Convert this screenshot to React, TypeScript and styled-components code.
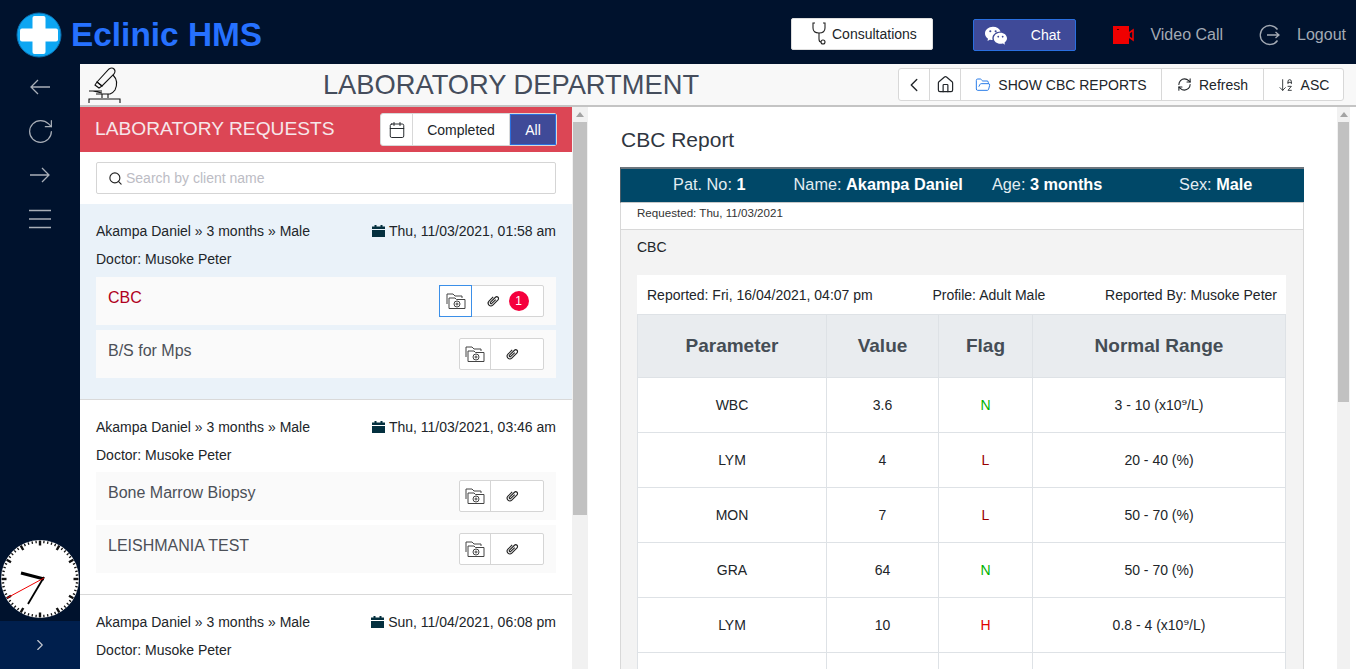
import React from 'react';
import styled, { createGlobalStyle } from 'styled-components';
import {
  RotateCw, ChevronRight, ChevronLeft, Home, FolderOpen,
  RefreshCw, ArrowDownAZ, Calendar, Search,
} from 'lucide-react';
import { BsWechat } from 'react-icons/bs';

const GlobalStyle = createGlobalStyle`
  html, body {
    margin: 0;
    height: 100%;
    overflow: hidden;
    font-family: "Liberation Sans", Arial, "DejaVu Sans", sans-serif;
    color: #212529;
  }
  * { box-sizing: border-box; }
`;

const Page = styled.div`
  display: flex;
  flex-direction: column;
  height: 669px;
  width: 1356px;
  overflow: hidden;
`;

const TopBar = styled.header`
  display: flex;
  align-items: center;
  height: 64px;
  flex: none;
  padding: 5px 10px 0 16px;
  background: #00122d;
`;

const Brand = styled.div`
  display: flex;
  align-items: center;
  gap: 9px;
  flex: 1;
  color: #2671ff;
  font-size: 33.4px;
  font-weight: 700;
`;

const TopNav = styled.nav`
  display: flex;
  align-items: center;
`;

const ConsultButton = styled.button`
  display: flex;
  align-items: center;
  justify-content: center;
  width: 142px;
  height: 32px;
  gap: 6px;
  margin: 0 40px 2px 0;
  padding: 0 0 0 4px;
  background: #fff;
  border: 1px solid #ddd;
  border-radius: 2px;
  color: #212529;
  font: 14px "Liberation Sans", Arial, sans-serif;
`;

const ChatButton = styled.button`
  display: flex;
  align-items: center;
  width: 103px;
  height: 32px;
  margin-right: 37px;
  padding: 0 15px 0 11px;
  justify-content: space-between;
  background: #3f4a98;
  border: 1px solid #2a6fe0;
  border-radius: 2px;
  color: #fff;
  font: 14px "Liberation Sans", Arial, sans-serif;
`;

const NavLink = styled.a<{ $gap: number; $last?: boolean }>`
  display: flex;
  align-items: center;
  gap: ${p => p.$gap}px;
  margin-right: ${p => (p.$last ? 0 : 36)}px;
  color: #a3aab4;
  font-size: 16px;
`;

const Body = styled.div`
  display: flex;
  flex: 1;
  min-height: 0;
`;

const SideBar = styled.aside`
  display: flex;
  flex-direction: column;
  width: 80px;
  flex: none;
  background: #00122d;
`;

const SideIcons = styled.div`
  display: flex;
  flex-direction: column;
  align-items: center;
  flex: 1;
  padding-top: 8px;
  color: #a9afb8;
`;

const SideIcon = styled.div`
  display: flex;
  align-items: center;
  justify-content: center;
  height: 44px;
  width: 100%;
  flex: none;
  padding-bottom: 14px;
`;

const ClockWrap = styled.div`
  display: flex;
  height: 83px;
  padding-bottom: 3px;
  align-items: flex-end;
  justify-content: center;
`;

const SideToggle = styled.div`
  display: flex;
  align-items: center;
  justify-content: center;
  height: 48px;
  background: #001f4d;
  color: #c5cad2;
`;

const Main = styled.main`
  display: flex;
  flex-direction: column;
  flex: 1;
  min-width: 0;
`;

const ToolBar = styled.div`
  display: flex;
  align-items: center;
  height: 43px;
  flex: none;
  padding: 0 12px 0 8px;
  background: #f8f8f8;
  border-bottom: 2px solid #c4c4c4;
`;

const PageTitle = styled.h1`
  flex: 1;
  margin: 0;
  text-align: center;
  font-size: 27.3px;
  font-weight: 400;
  color: #454d5c;
`;

const ButtonGroup = styled.div`
  display: flex;
  height: 33px;
  background: #fff;
  border: 1px solid #d8d8d8;
  border-radius: 3px;
`;

const GroupCell = styled.div<{ $w: number; $active?: boolean }>`
  display: flex;
  align-items: center;
  justify-content: center;
  gap: 7px;
  width: ${p => p.$w}px;
  font-size: 14px;
  color: ${p => (p.$active ? '#fff' : '#212529')};
  background: ${p => (p.$active ? '#3f4a98' : 'transparent')};
  border-right: 1px solid ${p => (p.$active ? '#2a6fe0' : '#d8d8d8')};
  ${p => p.$active && 'outline: 1px solid #2a6fe0; outline-offset: -1px;'}

  &:last-child {
    border-right: none;
  }
`;

const Panes = styled.div`
  display: flex;
  flex: 1;
  min-height: 0;
`;

const LeftPane = styled.section`
  display: flex;
  flex-direction: column;
  width: 492px;
  flex: none;
  overflow: hidden;
  background: #fff;
`;

const RequestsHeader = styled.div`
  display: flex;
  align-items: center;
  justify-content: space-between;
  height: 45px;
  flex: none;
  padding: 0 15px;
  background: #dc4655;
  color: #f6e6ea;
  font-size: 19.2px;
`;

const RequestsTitle = styled.span`
  padding-bottom: 2px;
`;

const SearchRow = styled.div`
  height: 52px;
  flex: none;
  padding: 10px 16px;
`;

const SearchBox = styled.div`
  display: flex;
  align-items: center;
  gap: 3px;
  height: 32px;
  padding: 0 11px;
  border: 1px solid #d5d5d5;
  border-radius: 2px;
  color: #bcbcc4;
  font-size: 14px;
`;

const Card = styled.article<{ $active?: boolean }>`
  flex: none;
  height: 195.5px;
  padding: 13px 16px 0;
  background: ${p => (p.$active ? '#eaf2f9' : '#fff')};
  border-bottom: 1px solid #d9d9d9;
`;

const CardLine = styled.div`
  display: flex;
  align-items: center;
  justify-content: space-between;
  height: 28px;
  font-size: 14px;
  color: #212529;
`;

const DateText = styled.span`
  display: flex;
  align-items: center;
  gap: 4px;
`;

const TestList = styled.div`
  display: flex;
  flex-direction: column;
  gap: 5px;
  margin-top: 3.6px;
`;

const TestRow = styled.div`
  display: flex;
  align-items: center;
  justify-content: space-between;
  height: 48px;
  padding: 0 12px;
  background: #fafafa;
`;

const TestName = styled.span<{ $red?: boolean }>`
  position: relative;
  top: -3px;
  font-size: 16px;
  color: ${p => (p.$red ? '#b00020' : '#4c5058')};
`;

const FileGroup = styled.div`
  display: flex;
  height: 32px;
  background: #fff;
  border: 1px solid #d5d5d5;
  border-radius: 2px;
`;

const FileCell = styled.div<{ $w: number; $focus?: boolean; $clip?: boolean }>`
  display: flex;
  align-items: center;
  justify-content: center;
  gap: 9px;
  width: ${p => p.$w}px;
  color: #222;
  border-right: 1px solid #d5d5d5;
  ${p => p.$clip && 'padding-right: 10px;'}
  ${p => p.$focus && 'outline: 1px solid #3b8fe8; outline-offset: 0; border-right: none;'}

  &:last-child {
    border-right: none;
  }
`;

const Badge = styled.span`
  display: flex;
  align-items: center;
  justify-content: center;
  width: 20px;
  height: 20px;
  border-radius: 50%;
  background: #f5003d;
  color: #fff;
  font-size: 12px;
`;

const ScrollBar = styled.div<{ $w: number; $thumb: number; $gutter?: number }>`
  display: flex;
  flex-direction: column;
  align-items: center;
  width: ${p => p.$w}px;
  flex: none;
  margin-right: ${p => p.$gutter ?? 0}px;
  padding: 0 1px;
  background: #f1f1f1;

  &::before {
    content: '';
    width: 0;
    height: 0;
    margin: 5px 0 5px;
    border-left: 4px solid transparent;
    border-right: 4px solid transparent;
    border-bottom: 5px solid #a3a3a3;
  }

  &::after {
    content: '';
    width: 100%;
    height: ${p => p.$thumb}px;
    background: #c1c1c1;
  }
`;

const ReportPane = styled.section`
  flex: 1;
  min-width: 0;
  overflow: hidden;
  padding: 19px 33px 0 32px;
  background: #fff;
`;

const ReportTitle = styled.h2`
  margin: 0 0 14px 1px;
  font-size: 21px;
  line-height: 27px;
  font-weight: 400;
  color: #2f3640;
`;

const PatientBar = styled.div`
  display: grid;
  grid-template-columns: repeat(4, 1fr);
  align-items: center;
  height: 36px;
  padding: 0 4px 2px;
  background: #004868;
  border-top: 2px solid #6c757d;
  border-left: 1px solid #4a5c68;
  border-bottom: 1px solid #c8c8c8;
  color: #e3edf2;
  font-size: 16.3px;
  text-align: center;
  white-space: nowrap;

  b {
    color: #fff;
  }
`;

const RequestedLine = styled.div`
  height: 27px;
  padding: 2px 16px 0;
  background: #fff;
  border: 1px solid #d8d8d8;
  border-top: none;
  font-size: 11.6px;
  line-height: 16px;
  color: #333;
`;

const ReportBody = styled.div`
  padding: 8px 17px 0 16px;
  background: #f3f3f3;
  border-left: 1px solid #d8d8d8;
  border-right: 1px solid #d8d8d8;
`;

const TestHeading = styled.div`
  height: 37px;
  line-height: 18px;
  font-size: 14px;
  color: #212529;
`;

const ReportedRow = styled.div`
  display: flex;
  justify-content: space-between;
  align-items: center;
  height: 39px;
  padding: 0 9px 0 10px;
  background: #fff;
  font-size: 14px;
  color: #212529;
`;

const ResultTable = styled.table`
  width: 100%;
  border-collapse: collapse;
  table-layout: fixed;
  background: #fff;
  font-size: 14px;
  text-align: center;

  th {
    height: 63px;
    padding: 0;
    background: #e9ecef;
    border: 1px solid #dee2e6;
    font-size: 19px;
    color: #454d55;
  }

  td {
    height: 55px;
    padding: 0;
    border: 1px solid #dee2e6;
    color: #212529;
  }
`;

const FlagCell = styled.td<{ $flag: string }>`
  && {
    color: ${p => (p.$flag === 'N' ? '#00b300' : p.$flag === 'H' ? '#e00000' : '#990000')};
  }
`;

const SuperNine = styled.span`
  font-family: "DejaVu Sans", sans-serif;
`;

const Logo = () => (
  <svg width="46" height="46" viewBox="0 0 46 46">
    <circle cx="23" cy="23" r="22" fill="#0da6f2" stroke="#0b6fb0" strokeWidth="1" />
    <rect x="16.5" y="4" width="13" height="38" rx="2" fill="#fff" />
    <rect x="4" y="16.5" width="38" height="13" rx="2" fill="#fff" />
  </svg>
);

const StethoscopeIcon = () => (
  <svg width="14" height="24" viewBox="0 0 14 24" fill="none" stroke="#222" strokeWidth="1.1">
    <path d="M3 1 H1 V6 Q1 11 7 11 Q13 11 13 6 V1 H11" />
    <path d="M7 11 V17 Q7 20 9 20" />
    <circle cx="11" cy="20" r="2" />
  </svg>
);

const VideoIcon = () => (
  <svg width="21" height="18" viewBox="0 0 21 18">
    <rect x="0" y="0" width="16" height="18" fill="#f00000" />
    <rect x="4" y="3" width="2" height="1" fill="#400" />
    <path d="M16 7 L20 4 V14 L16 11 Z" fill="none" stroke="#f00000" strokeWidth="1.6" />
  </svg>
);

const LogoutIcon = () => (
  <svg width="22" height="22" viewBox="0 0 22 22" fill="none" stroke="#a3aab4" strokeWidth="1.3">
    <path d="M18.5 5.5 A9.5 9.5 0 1 0 18.5 16.5" />
    <path d="M8 11 H20 M16.5 8 L20 11 L16.5 14" />
  </svg>
);

const SideArrow = ({ flip }: { flip?: boolean }) => (
  <svg width="20" height="16" viewBox="0 0 20 16" fill="none" stroke="currentColor" strokeWidth="1.3">
    <path d={flip ? 'M0 8 H19 M12 1 L19 8 L12 15' : 'M20 8 H1 M8 1 L1 8 L8 15'} />
  </svg>
);

const SideMenu = () => (
  <svg width="22" height="20" viewBox="0 0 22 20" stroke="currentColor" strokeWidth="1.6">
    <path d="M0 1.5 H22 M0 10 H22 M0 18.5 H22" />
  </svg>
);

const MicroscopeIcon = () => (
  <svg width="36" height="38" viewBox="0 0 36 38" fill="none" stroke="#111" strokeWidth="1.1">
    <path d="M9 16 L21 3 Q24 1 26 3 Q28 5 26 8 L14 20 Z" />
    <path d="M7 19 L9 16 L14 20 L11 22 Z" />
    <path d="M25 9 Q31 15 27 24 Q25 27 22 28 H8" />
    <path d="M1 25 H14 M5 25 L14 27" />
    <path d="M14 28 V32 M20 28 V32" />
    <path d="M1 37 V33 H32 V37" />
  </svg>
);

const FolderPlusIcon = () => (
  <svg width="20" height="18" viewBox="0 0 20 18" fill="none" stroke="#444" strokeWidth="1">
    <path d="M1 12 V2 H7 L9 4 H16 V6" />
    <path d="M3 14 V6 H9 L10.5 7.5 H19 V16.5 H3 Z" />
    <circle cx="11" cy="12" r="3" />
    <path d="M9.5 12 H12.5 M11 10.5 V13.5" />
  </svg>
);

const ClipIcon = () => (
  <svg width="14" height="14" viewBox="0 0 14 14" fill="none" stroke="#222" strokeWidth="1.1">
    <g transform="rotate(45 7 7)">
      <path d="M4.3 4 V10 a2.7 2.7 0 0 0 5.4 0 V2.6 a1.8 1.8 0 0 0 -3.6 0 V9.6 a.9 .9 0 0 0 1.8 0 V4" />
    </g>
  </svg>
);

const SolidCalendar = () => (
  <svg width="13" height="12" viewBox="0 0 13 12" fill="#04303f">
    <rect x="0" y="1.5" width="13" height="2.5" />
    <rect x="0" y="5" width="13" height="7" />
    <rect x="2.5" y="0" width="2" height="2" />
    <rect x="8.5" y="0" width="2" height="2" />
  </svg>
);

const Clock = () => {
  const ticks = Array.from({ length: 60 }, (_, i) => i);
  return (
    <svg width="78" height="78" viewBox="0 0 78 78">
      <circle cx="39" cy="39" r="39" fill="#fff" />
      {ticks.map(i => (
        <line
          key={i}
          x1="39"
          y1="0.5"
          x2="39"
          y2={i % 5 === 0 ? 5.5 : 3}
          stroke="#111"
          strokeWidth={i % 5 === 0 ? 2.4 : 1.3}
          transform={`rotate(${i * 6} 39 39)`}
        />
      ))}
      <line x1="43" y1="39" x2="20" y2="33" stroke="#000" strokeWidth="3.2" />
      <line x1="43" y1="37" x2="27" y2="64" stroke="#000" strokeWidth="1.8" />
      <line x1="43" y1="38" x2="6" y2="58" stroke="#f00000" strokeWidth="1" />
    </svg>
  );
};

const FileButtons = ({ focus, badge }: { focus?: boolean; badge?: number }) => (
  <FileGroup>
    <FileCell $w={31} $focus={focus}>
      <FolderPlusIcon />
    </FileCell>
    <FileCell $w={badge ? 72 : 52} $clip={!badge}>
      <ClipIcon />
      {badge ? <Badge>{badge}</Badge> : null}
    </FileCell>
  </FileGroup>
);

const RangeText = ({ text }: { text: string }) => {
  const [before, after] = text.split('⁹');
  if (after === undefined) return <>{text}</>;
  return <>{before}<SuperNine>⁹</SuperNine>{after}</>;
};

type Test = { name: string; red?: boolean; focus?: boolean; badge?: number };
type Request = { date: string; active?: boolean; tests: Test[] };

const requests: Request[] = [
  {
    date: 'Thu, 11/03/2021, 01:58 am',
    active: true,
    tests: [
      { name: 'CBC', red: true, focus: true, badge: 1 },
      { name: 'B/S for Mps' },
    ],
  },
  {
    date: 'Thu, 11/03/2021, 03:46 am',
    tests: [{ name: 'Bone Marrow Biopsy' }, { name: 'LEISHMANIA TEST' }],
  },
  { date: 'Sun, 11/04/2021, 06:08 pm', tests: [] },
];

const results = [
  ['WBC', '3.6', 'N', '3 - 10 (x10⁹/L)'],
  ['LYM', '4', 'L', '20 - 40 (%)'],
  ['MON', '7', 'L', '50 - 70 (%)'],
  ['GRA', '64', 'N', '50 - 70 (%)'],
  ['LYM', '10', 'H', '0.8 - 4 (x10⁹/L)'],
  ['', '', '', ''],
];

const App: React.FC = () => {
  return (
    <Page>
      <GlobalStyle />
      <TopBar>
        <Brand>
          <Logo />
          Eclinic HMS
        </Brand>
        <TopNav>
          <ConsultButton>
            <StethoscopeIcon />
            Consultations
          </ConsultButton>
          <ChatButton>
            <BsWechat size={22} />
            Chat
          </ChatButton>
          <NavLink $gap={16}>
            <VideoIcon />
            Video Call
          </NavLink>
          <NavLink $gap={16} $last>
            <LogoutIcon />
            Logout
          </NavLink>
        </TopNav>
      </TopBar>
      <Body>
        <SideBar>
          <SideIcons>
            <SideIcon><SideArrow /></SideIcon>
            <SideIcon><RotateCw size={29} strokeWidth={1} /></SideIcon>
            <SideIcon><SideArrow flip /></SideIcon>
            <SideIcon><SideMenu /></SideIcon>
          </SideIcons>
          <ClockWrap>
            <Clock />
          </ClockWrap>
          <SideToggle>
            <ChevronRight size={18} strokeWidth={1.5} />
          </SideToggle>
        </SideBar>
        <Main>
          <ToolBar>
            <MicroscopeIcon />
            <PageTitle>LABORATORY DEPARTMENT</PageTitle>
            <ButtonGroup>
              <GroupCell $w={31}>
                <ChevronLeft size={22} strokeWidth={1.5} />
              </GroupCell>
              <GroupCell $w={31}>
                <Home size={19} strokeWidth={1.5} />
              </GroupCell>
              <GroupCell $w={201}>
                <FolderOpen size={16} color="#2b7de9" strokeWidth={1.5} />
                SHOW CBC REPORTS
              </GroupCell>
              <GroupCell $w={102}>
                <RefreshCw size={15} strokeWidth={1.7} />
                Refresh
              </GroupCell>
              <GroupCell $w={79}>
                <ArrowDownAZ size={16} strokeWidth={1.3} />
                ASC
              </GroupCell>
            </ButtonGroup>
          </ToolBar>
          <Panes>
            <LeftPane>
              <RequestsHeader>
                <RequestsTitle>LABORATORY REQUESTS</RequestsTitle>
                <ButtonGroup>
                  <GroupCell $w={32}>
                    <Calendar size={18} strokeWidth={1.3} />
                  </GroupCell>
                  <GroupCell $w={97}>Completed</GroupCell>
                  <GroupCell $w={46} $active>All</GroupCell>
                </ButtonGroup>
              </RequestsHeader>
              <SearchRow>
                <SearchBox>
                  <Search size={15} color="#222" strokeWidth={1.8} />
                  Search by client name
                </SearchBox>
              </SearchRow>
              {requests.map(r => (
                <Card key={r.date} $active={r.active}>
                  <CardLine>
                    <span>Akampa Daniel » 3 months » Male</span>
                    <DateText>
                      <SolidCalendar />
                      {r.date}
                    </DateText>
                  </CardLine>
                  <CardLine>Doctor: Musoke Peter</CardLine>
                  <TestList>
                    {r.tests.map(t => (
                      <TestRow key={t.name}>
                        <TestName $red={t.red}>{t.name}</TestName>
                        <FileButtons focus={t.focus} badge={t.badge} />
                      </TestRow>
                    ))}
                  </TestList>
                </Card>
              ))}
            </LeftPane>
            <ScrollBar $w={16} $thumb={393} />
            <ReportPane>
              <ReportTitle>CBC Report</ReportTitle>
              <PatientBar>
                <span>Pat. No: <b>1</b></span>
                <span>Name: <b>Akampa Daniel</b></span>
                <span>Age: <b>3 months</b></span>
                <span>Sex: <b>Male</b></span>
              </PatientBar>
              <RequestedLine>Requested: Thu, 11/03/2021</RequestedLine>
              <ReportBody>
                <TestHeading>CBC</TestHeading>
                <ReportedRow>
                  <span>Reported: Fri, 16/04/2021, 04:07 pm</span>
                  <span>Profile: Adult Male</span>
                  <span>Reported By: Musoke Peter</span>
                </ReportedRow>
                <ResultTable>
                  <colgroup>
                    <col style={{ width: 189 }} />
                    <col style={{ width: 112 }} />
                    <col style={{ width: 94 }} />
                    <col />
                  </colgroup>
                  <thead>
                    <tr>
                      <th>Parameter</th>
                      <th>Value</th>
                      <th>Flag</th>
                      <th>Normal Range</th>
                    </tr>
                  </thead>
                  <tbody>
                    {results.map((row, i) => (
                      <tr key={i}>
                        <td>{row[0]}</td>
                        <td>{row[1]}</td>
                        <FlagCell $flag={row[2]}>{row[2]}</FlagCell>
                        <td><RangeText text={row[3]} /></td>
                      </tr>
                    ))}
                  </tbody>
                </ResultTable>
              </ReportBody>
            </ReportPane>
            <ScrollBar $w={13} $thumb={280} $gutter={6} />
          </Panes>
        </Main>
      </Body>
    </Page>
  );
};

export default App;
